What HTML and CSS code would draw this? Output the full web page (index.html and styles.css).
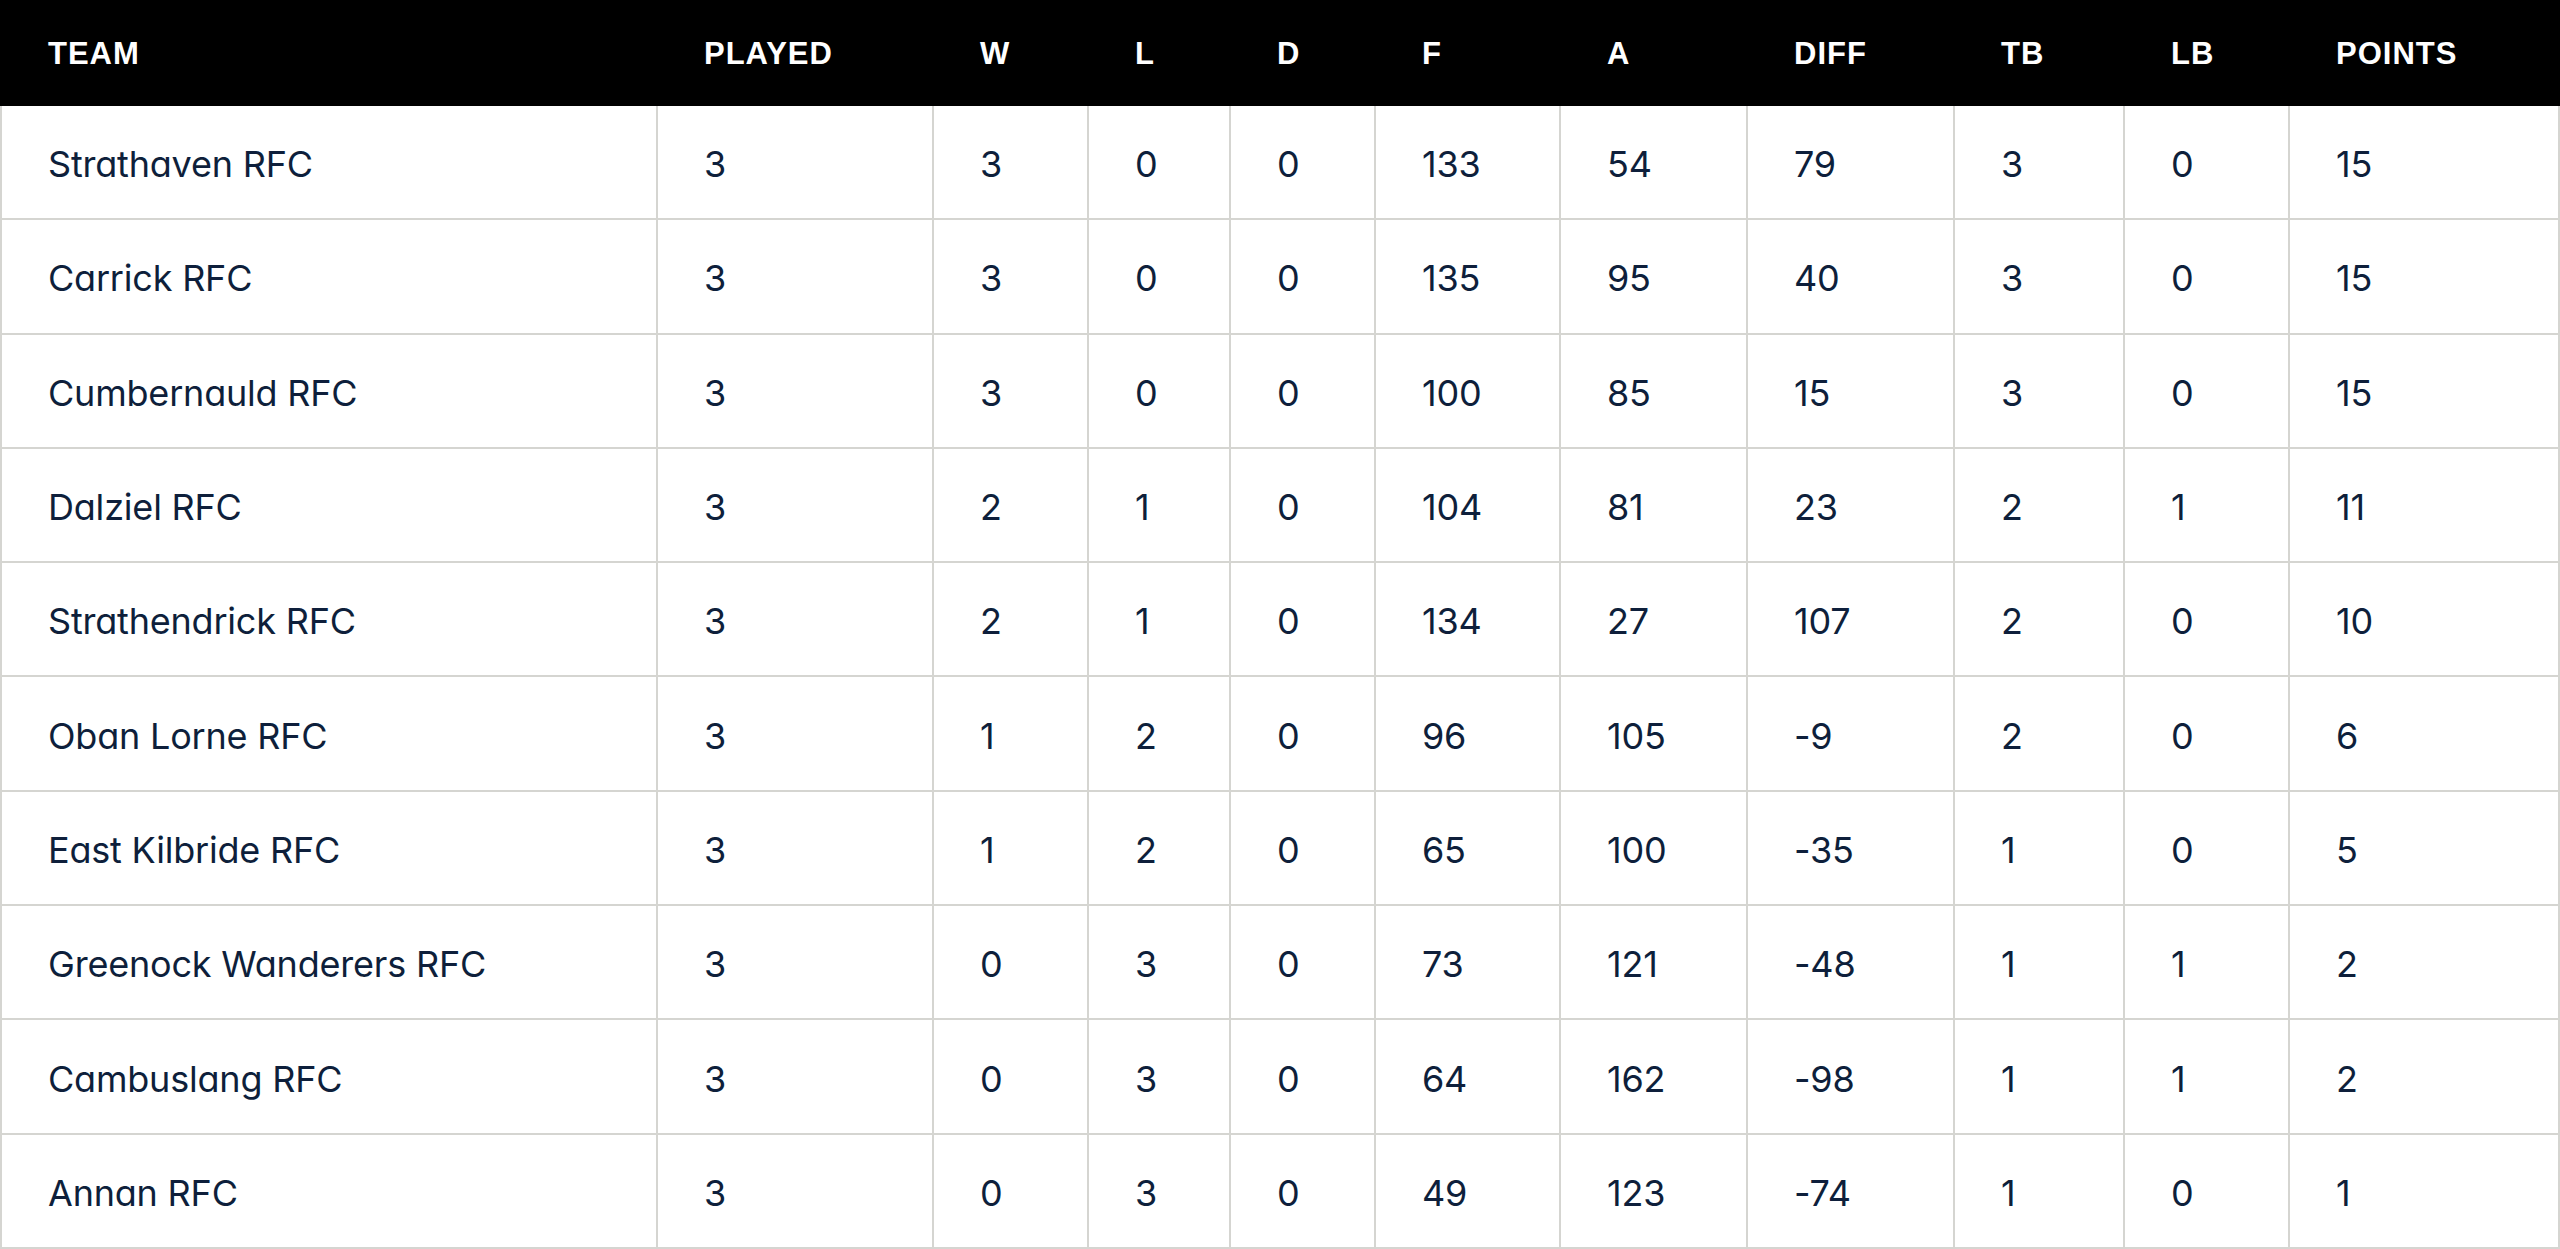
FILE: index.html
```html
<!DOCTYPE html>
<html lang="en">
<head>
<meta charset="utf-8">
<title>League Table</title>
<link rel="stylesheet" href="styles.css">
</head>
<body>
<table class="league">
  <colgroup>
    <col class="c-team">
    <col class="c-played">
    <col class="c-w">
    <col class="c-l">
    <col class="c-d">
    <col class="c-f">
    <col class="c-a">
    <col class="c-diff">
    <col class="c-tb">
    <col class="c-lb">
    <col class="c-pts">
  </colgroup>
  <thead>
    <tr>
      <th>TEAM</th><th>PLAYED</th><th>W</th><th>L</th><th>D</th><th>F</th><th>A</th><th>DIFF</th><th>TB</th><th>LB</th><th>POINTS</th>
    </tr>
  </thead>
  <tbody>
    <tr><td>Strathaven RFC</td><td>3</td><td>3</td><td>0</td><td>0</td><td>133</td><td>54</td><td>79</td><td>3</td><td>0</td><td>15</td></tr>
    <tr><td>Carrick RFC</td><td>3</td><td>3</td><td>0</td><td>0</td><td>135</td><td>95</td><td>40</td><td>3</td><td>0</td><td>15</td></tr>
    <tr><td>Cumbernauld RFC</td><td>3</td><td>3</td><td>0</td><td>0</td><td>100</td><td>85</td><td>15</td><td>3</td><td>0</td><td>15</td></tr>
    <tr><td>Dalziel RFC</td><td>3</td><td>2</td><td>1</td><td>0</td><td>104</td><td>81</td><td>23</td><td>2</td><td>1</td><td>11</td></tr>
    <tr><td>Strathendrick RFC</td><td>3</td><td>2</td><td>1</td><td>0</td><td>134</td><td>27</td><td>107</td><td>2</td><td>0</td><td>10</td></tr>
    <tr><td>Oban Lorne RFC</td><td>3</td><td>1</td><td>2</td><td>0</td><td>96</td><td>105</td><td>-9</td><td>2</td><td>0</td><td>6</td></tr>
    <tr><td>East Kilbride RFC</td><td>3</td><td>1</td><td>2</td><td>0</td><td>65</td><td>100</td><td>-35</td><td>1</td><td>0</td><td>5</td></tr>
    <tr><td>Greenock Wanderers RFC</td><td>3</td><td>0</td><td>3</td><td>0</td><td>73</td><td>121</td><td>-48</td><td>1</td><td>1</td><td>2</td></tr>
    <tr><td>Cambuslang RFC</td><td>3</td><td>0</td><td>3</td><td>0</td><td>64</td><td>162</td><td>-98</td><td>1</td><td>1</td><td>2</td></tr>
    <tr><td>Annan RFC</td><td>3</td><td>0</td><td>3</td><td>0</td><td>49</td><td>123</td><td>-74</td><td>1</td><td>0</td><td>1</td></tr>
  </tbody>
</table>
</body>
</html>
```

FILE: styles.css
```css
html, body {
  margin: 0;
  padding: 0;
  background: #ffffff;
}

.league {
  width: 2560px;
  table-layout: fixed;
  border-collapse: separate;
  border-spacing: 0;
  font-family: "Inter", "Liberation Sans", sans-serif;
  font-feature-settings: "cv11";
  color: #0e1f3b;
}

.c-team   { width: 656px; }
.c-played { width: 276px; }
.c-w      { width: 155px; }
.c-l      { width: 142px; }
.c-d      { width: 145px; }
.c-f      { width: 185px; }
.c-a      { width: 187px; }
.c-diff   { width: 207px; }
.c-tb     { width: 170px; }
.c-lb     { width: 165px; }
.c-pts    { width: 272px; }

.league thead tr {
  height: 106px;
  background: #000000;
}

.league th {
  padding: 2px 0 0 48px;
  text-align: left;
  vertical-align: middle;
  font-family: "Liberation Sans", Arial, sans-serif;
  font-weight: 700;
  font-size: 31px;
  letter-spacing: 1px;
  color: #ffffff;
  white-space: nowrap;
}

.league tbody tr {
  height: 114.3px;
}

.league td {
  box-sizing: border-box;
  padding: 4px 0 0 46px;
  border-left: 2px solid #d5d5d1;
  border-bottom: 2px solid #d5d5d1;
  vertical-align: middle;
  font-size: 36px;
  font-weight: 400;
  letter-spacing: -0.2px;
  white-space: nowrap;
}

.league td:last-child {
  border-right: 2px solid #d5d5d1;
}
```
